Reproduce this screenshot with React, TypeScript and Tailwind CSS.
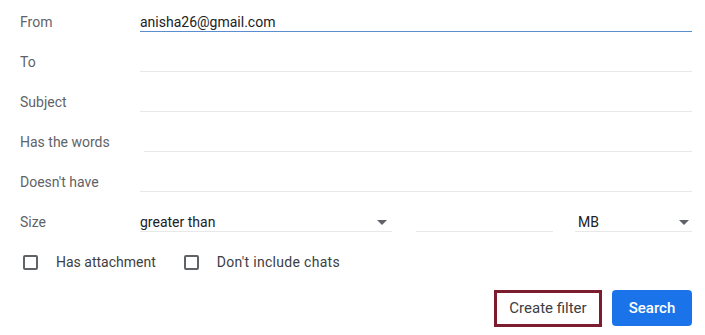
import React from "react";

const Caret = () => (
  <svg width="10" height="5" viewBox="0 0 10 5" className="shrink-0">
    <path d="M0 0 L10 0 L5 5 Z" fill="#5f6368" />
  </svg>
);

function Row({ label, children }: { label: string; children: React.ReactNode }) {
  return (
    <div className="flex h-10 pt-[13px]">
      <div className="w-[120px] shrink-0 h-[19px] leading-[18px] text-[14px] text-[#5f6368]">{label}</div>
      {children}
    </div>
  );
}

function Line({ value, focus, className = "" }: { value?: string; focus?: boolean; className?: string }) {
  return (
    <div
      className={`h-[19px] leading-[18px] text-[14px] text-[#202124] border-b ${
        focus ? "border-[#5b8dcf]" : "border-[#e8e8e8]"
      } ${className}`}
    >
      {value}
    </div>
  );
}

export default function App() {
  return (
    <div
      className="w-[705px] h-[335px] bg-white pl-[20px] pr-[13px]"
      style={{ fontFamily: "Roboto, 'Liberation Sans', sans-serif" }}
    >
      <Row label="From">
        <Line value="anisha26@gmail.com" focus className="flex-1" />
      </Row>
      <Row label="To">
        <Line className="flex-1" />
      </Row>
      <Row label="Subject">
        <Line className="flex-1" />
      </Row>
      <Row label="Has the words">
        <Line className="flex-1 ml-[4px]" />
      </Row>
      <Row label="Doesn't have">
        <Line className="flex-1" />
      </Row>
      <Row label="Size">
        <div className="flex flex-1">
          <div className="w-[252px] h-[19px] border-b border-[#e8e8e8] flex items-center justify-between pr-[5px] text-[14px] text-[#202124] leading-[18px]">
            <span>greater than</span>
            <Caret />
          </div>
          <div className="w-[137px] ml-[24px] h-[19px] border-b border-[#e8e8e8]" />
          <div className="flex-1 ml-[22px] h-[19px] border-b border-[#e8e8e8] flex items-center justify-between pl-[3px] pr-[3px] text-[14px] text-[#202124] leading-[18px]">
            <span>MB</span>
            <Caret />
          </div>
        </div>
      </Row>
      <div className="flex items-center h-[22px] mt-[11px] text-[14px] text-[#3c4043]">
        <div className="ml-[3px] w-[15px] h-[15px] border-2 border-[#5f6368] rounded-[2px]" />
        <span className="ml-[18px]">Has attachment</span>
        <div className="ml-[28px] w-[15px] h-[15px] border-2 border-[#5f6368] rounded-[2px]" />
        <span className="ml-[18px] tracking-[0.3px]">Don't include chats</span>
      </div>
      <div className="flex justify-end items-start mt-[17px]">
        <div className="w-[108px] h-[37px] border-[3px] border-[#7b1d2e] flex items-center justify-center text-[15px] text-[#3c4043]">
          Create filter
        </div>
        <div className="ml-[10px] w-[80px] h-[36px] rounded-[4px] bg-[#1a73e8] flex items-center justify-center text-[15px] font-medium text-white">
          Search
        </div>
      </div>
    </div>
  );
}
